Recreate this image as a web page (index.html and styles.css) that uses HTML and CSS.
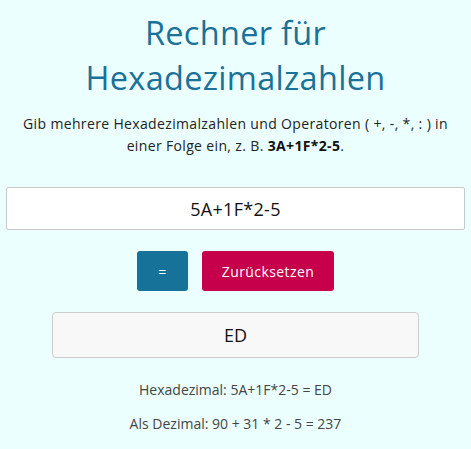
FILE: index.html
```html
<!DOCTYPE html>
<html lang="de">
<head>
<meta charset="utf-8">
<title>Rechner für Hexadezimalzahlen</title>
<link rel="stylesheet" href="styles.css">
</head>
<body>
<main class="calc">
  <h1 class="title">Rechner für Hexadezimalzahlen</h1>
  <p class="intro">Gib mehrere Hexadezimalzahlen und Operatoren ( +, -, *, : ) in einer Folge ein, z. B. <strong>3A+1F*2-5</strong>.</p>
  <input class="expr" type="text" value="5A+1F*2-5">
  <div class="actions">
    <button class="btn btn-eq" type="button">=</button>
    <button class="btn btn-reset" type="button">Zurücksetzen</button>
  </div>
  <div class="result">ED</div>
  <p class="line">Hexadezimal: 5A+1F*2-5 = ED</p>
  <p class="line">Als Dezimal: 90 + 31 * 2 - 5 = 237</p>
</main>
</body>
</html>
```
FILE: styles.css
```css
html, body {
  margin: 0;
  padding: 0;
  background: #ebffff;
}
body {
  font-family: "Open Sans", "Noto Sans", sans-serif;
  color: #222;
}
.calc {
  padding: 0 6px;
  display: flex;
  flex-direction: column;
  align-items: center;
  text-align: center;
}
.title {
  margin: 10px 0 0;
  font-size: 32.5px;
  font-weight: 400;
  letter-spacing: 0.3px;
  line-height: 45px;
  color: #1b7197;
  width: 360px;
}
.intro {
  margin: 13px 0 0;
  font-size: 14px;
  letter-spacing: 0.35px;
  line-height: 22px;
  color: #222;
  width: 450px;
}
.intro strong {
  font-weight: 700;
  color: #111;
}
.expr {
  margin-top: 30px;
  box-sizing: border-box;
  width: 100%;
  height: 43px;
  border: 1px solid #c8c8c8;
  border-radius: 2px;
  background: #fff;
  text-align: center;
  font-family: inherit;
  font-size: 18px;
  letter-spacing: 0.3px;
  color: #111;
  outline: none;
}
.actions {
  margin-top: 21px;
  display: flex;
  gap: 14px;
}
.btn {
  height: 40px;
  border: none;
  border-radius: 3px;
  color: #fff;
  font-family: inherit;
  font-size: 14px;
  letter-spacing: 0.4px;
  padding: 0;
}
.btn-eq {
  width: 51px;
  background: #17729a;
}
.btn-reset {
  width: 132px;
  background: #c6004a;
}
.result {
  margin-top: 21px;
  box-sizing: border-box;
  width: 80%;
  height: 46px;
  border: 1px solid #cccccc;
  border-radius: 4px;
  background: #f8f8f8;
  display: flex;
  align-items: center;
  justify-content: center;
  font-size: 18px;
  color: #111;
}
.line {
  margin: 0;
  font-size: 14px;
  line-height: 22px;
  color: #444;
}
.result + .line {
  margin-top: 21px;
}
.line + .line {
  margin-top: 12px;
}
```
